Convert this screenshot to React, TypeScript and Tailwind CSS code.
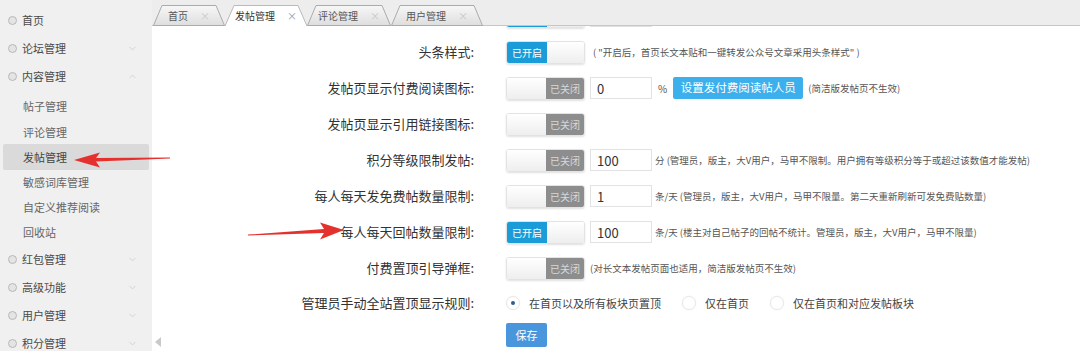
import { ChevronDown, ChevronUp } from "lucide-react";

const FONT = "font-['Noto_Sans_CJK_SC','Microsoft_YaHei',sans-serif]";

const subItems = ["帖子管理", "评论管理", "发帖管理", "敏感词库管理", "自定义推荐阅读", "回收站"];

function MainItem({ label, chevron }: { label: string; chevron?: "up" | "down" }) {
  return (
    <div className="flex h-[28px] items-center pl-[8px] pr-[14px]">
      <span className="h-[9px] w-[9px] shrink-0 rounded-full border-[1.5px] border-[#b8b8b8] bg-[#e4e4e4]" />
      <span className="ml-[5px] text-[11px] text-[#4a4a4a]">{label}</span>
      {chevron === "down" && <ChevronDown className="ml-auto text-[#c4c4c4]" size={11} strokeWidth={1.5} />}
      {chevron === "up" && <ChevronUp className="ml-auto text-[#c4c4c4]" size={11} strokeWidth={1.5} />}
    </div>
  );
}

function Tab({ label, w, widthClass, active, idx }: { label: string; w: number; widthClass: string; active?: boolean; idx: number }) {
  const gid = `tabgrad${idx}`;
  return (
    <div className={`relative -mb-px flex h-[21px] shrink-0 items-center justify-center gap-[12px] ${widthClass}`}>
      <svg className="absolute inset-0" width={w} height={21} viewBox={`0 0 ${w} 21`}>
        <defs>
          <linearGradient id={gid} x1="0" y1="0" x2="0" y2="1">
            <stop offset="0" stopColor="#f7f7f7" />
            <stop offset="1" stopColor="#dedede" />
          </linearGradient>
        </defs>
        {active ? (
          <>
            <polygon points={`0,21 9,0.5 ${w - 9},0.5 ${w},21`} fill="#ffffff" />
            <polyline points={`0,21 9,0.5 ${w - 9},0.5 ${w},21`} fill="none" stroke="#b9b9b9" strokeWidth="1" />
          </>
        ) : (
          <polygon
            points={`0.5,20.5 9,0.5 ${w - 9},0.5 ${w - 0.5},20.5`}
            fill={`url(#${gid})`}
            stroke="#ababab"
            strokeWidth="1"
          />
        )}
      </svg>
      <span className={`relative text-[10px] ${active ? "text-[#333]" : "text-[#555]"}`}>{label}</span>
      <span className={`relative text-[10px] ${active ? "text-[#999]" : "text-[#c8c8c8]"}`}>×</span>
    </div>
  );
}

function Toggle({ on, bare }: { on: boolean; bare?: boolean }) {
  return (
    <div className="flex h-[23px] w-[79px] shrink-0 overflow-hidden rounded-[3px] border border-[#e3e3e3] text-[10px] shadow-[0_1px_2px_rgba(0,0,0,0.12)]">
      {on ? (
        <>
          <div className="flex w-[40px] items-center justify-center bg-[#1b9bd7] text-white">{bare ? null : "已开启"}</div>
          <div className="flex-1 bg-linear-to-b from-white to-[#eeeeee]" />
        </>
      ) : (
        <>
          <div className="w-[39px] bg-linear-to-b from-white to-[#eeeeee]" />
          <div className="flex flex-1 items-center justify-center bg-[#8d8d8d] text-[#d8d8d8]">已关闭</div>
        </>
      )}
    </div>
  );
}

function NumInput({ value }: { value: string }) {
  return (
    <input
      readOnly
      value={value}
      className="ml-[5px] h-[22px] w-[62px] shrink-0 border border-[#e2e2e2] bg-white px-[6px] text-[13px] text-[#333] outline-none"
    />
  );
}

function Row({ label, children, h = "h-9" }: { label: string; children?: React.ReactNode; h?: string }) {
  return (
    <div className={`flex items-center ${h}`}>
      <div className="w-[322px] shrink-0 text-right text-[13px] text-[#333]">{label}</div>
      <div className="ml-[32px] flex items-center">{children}</div>
    </div>
  );
}

function Note({ children, ml = "ml-[6px]" }: { children: React.ReactNode; ml?: string }) {
  return <span className={`${ml} whitespace-nowrap text-[9.5px] text-[#555]`}>{children}</span>;
}

function Radio({ checked, label, className }: { checked?: boolean; label: string; className?: string }) {
  return (
    <div className={`flex items-center ${className ?? ""}`}>
      <span className="flex h-[14px] w-[14px] items-center justify-center rounded-full border border-[#e8e8e8] bg-white shadow-[0_0_2px_rgba(0,0,0,0.06)]">
        {checked && <span className="h-[4px] w-[4px] rounded-full bg-[#2c5f90]" />}
      </span>
      <span className="ml-[9px] text-[11px] text-[#444]">{label}</span>
    </div>
  );
}

export default function App() {
  return (
    <div className={`relative flex h-[351px] w-[1080px] overflow-hidden bg-white ${FONT}`}>
      {/* Sidebar */}
      <aside className="w-[152px] shrink-0 bg-[#f0f0f0] pt-[6px]">
        <MainItem label="首页" />
        <MainItem label="论坛管理" chevron="down" />
        <MainItem label="内容管理" chevron="up" />
        <div className="pt-[4px]">
          {subItems.map((s) => (
            <div
              key={s}
              className={`mx-[3px] flex h-[25.2px] items-center rounded-[2px] pl-[20px] text-[11px] ${
                s === "发帖管理" ? "bg-[#dadada] text-[#444]" : "text-[#666]"
              }`}
            >
              {s}
            </div>
          ))}
        </div>
        <MainItem label="红包管理" chevron="down" />
        <MainItem label="高级功能" chevron="down" />
        <MainItem label="用户管理" chevron="down" />
        <MainItem label="积分管理" chevron="down" />
      </aside>

      {/* Main */}
      <div className="relative flex min-w-0 flex-1 flex-col">
        <div className="flex h-[26px] shrink-0 items-end border-b border-[#c6c6c6] bg-[#ededed] pl-px">
          <Tab idx={0} label="首页" w={72} widthClass="w-[72px]" />
          <Tab idx={1} label="发帖管理" w={82} widthClass="w-[82px]" active />
          <Tab idx={2} label="评论管理" w={84} widthClass="w-[84px]" />
          <Tab idx={3} label="用户管理" w={92} widthClass="w-[92px]" />
        </div>

        <div className="flex-1 overflow-hidden">
          <div className="-mt-[28px]">
            {/* row scrolled out of view above */}
            <Row label="">
              <Toggle on bare />
              <NumInput value="" />
            </Row>
            <Row label="头条样式:">
              <Toggle on />
              <Note ml="ml-[8px]">( "开启后，首页长文本贴和一键转发公众号文章采用头条样式" )</Note>
            </Row>
            <Row label="发帖页显示付费阅读图标:">
              <Toggle on={false} />
              <NumInput value="0" />
              <span className="ml-[6px] text-[10px] text-[#555]">%</span>
              <button className="ml-[6px] flex h-[22px] w-[130px] items-center justify-center rounded-[2px] bg-[#3cb0ec] text-[11.5px] text-white">
                设置发付费阅读帖人员
              </button>
              <Note ml="ml-[5px]">(简洁版发帖页不生效)</Note>
            </Row>
            <Row label="发帖页显示引用链接图标:">
              <Toggle on={false} />
            </Row>
            <Row label="积分等级限制发帖:">
              <Toggle on={false} />
              <NumInput value="100" />
              <Note ml="ml-[3px]">分 (管理员，版主，大V用户，马甲不限制。用户拥有等级积分等于或超过该数值才能发帖)</Note>
            </Row>
            <Row label="每人每天发免费帖数量限制:">
              <Toggle on={false} />
              <NumInput value="1" />
              <Note ml="ml-[3px]">条/天 (管理员，版主，大V用户，马甲不限量。第二天重新刷新可发免费贴数量)</Note>
            </Row>
            <Row label="每人每天回帖数量限制:">
              <Toggle on />
              <NumInput value="100" />
              <Note ml="ml-[3px]">条/天 (楼主对自己帖子的回帖不统计。管理员，版主，大V用户，马甲不限量)</Note>
            </Row>
            <Row label="付费置顶引导弹框:">
              <Toggle on={false} />
              <Note ml="ml-[5px]">(对长文本发帖页面也适用，简洁版发帖页不生效)</Note>
            </Row>
            <Row label="管理员手动全站置顶显示规则:" h="h-[34px]">
              <Radio checked label="在首页以及所有板块页置顶" />
              <Radio label="仅在首页" className="ml-[21px]" />
              <Radio label="仅在首页和对应发帖板块" className="ml-[21px]" />
            </Row>
            <div className="flex pt-[3px] pl-[354px]">
              <button className="h-[24px] w-[41px] rounded-[2px] bg-[#4a96dc] text-[11px] text-white">保存</button>
            </div>
          </div>
        </div>

        {/* collapse handle */}
        <span className="absolute bottom-[4px] left-[3px] h-0 w-0 border-y-[5px] border-r-[6px] border-y-transparent border-r-[#c9c9c9]" />
      </div>

      {/* annotation arrows */}
      <svg className="pointer-events-none absolute inset-0" width="1080" height="351" viewBox="0 0 1080 351">
        <polygon
          points="74,160 100,152.5 96,158 170,157.6 170,158.4 96,161.5 100,167.5"
          fill="#e4312e"
        />
        <polygon
          points="344,230 320,222.5 324,229 248,234.6 248,235.4 324,233 320,239.5"
          fill="#e4312e"
        />
      </svg>
    </div>
  );
}
